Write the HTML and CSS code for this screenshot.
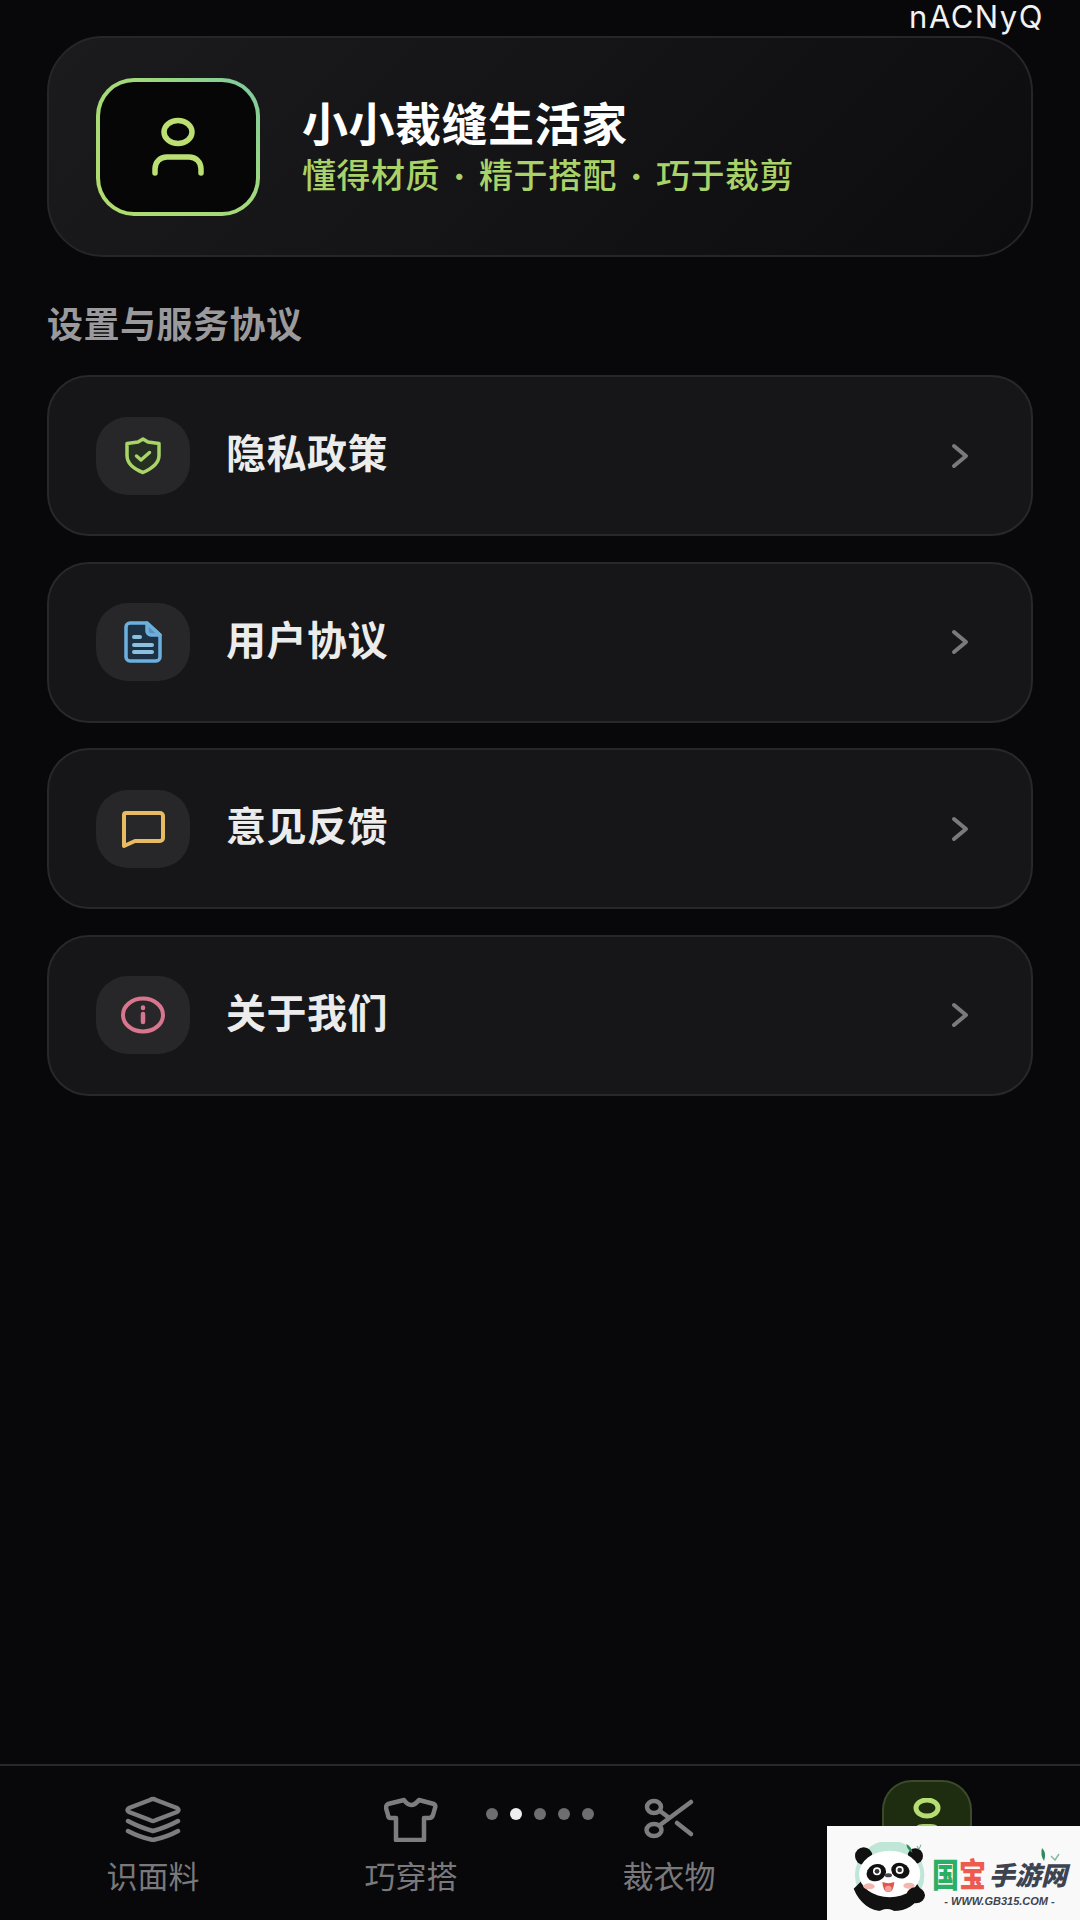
FILE: index.html
```html
<!DOCTYPE html>
<html lang="zh">
<head>
  <meta charset="UTF-8">
  <title>小小裁缝生活家</title>
  <link rel="stylesheet" href="styles.css">
</head>
<body>
  <div class="page">
    <div class="code-tag">nACNyQ</div>

    <!-- 头部卡片 -->
    <div class="profile">
      <div class="avatar">
        <svg width="60" height="60" viewBox="0 0 60 60" fill="none" stroke="#bcdf74" stroke-width="5.5" stroke-linecap="round">
          <ellipse cx="30" cy="15" rx="14" ry="11.5"/>
          <path d="M7 56v-4c0-7 5-12 12-12h22c7 0 12 5 12 12v4"/>
        </svg>
      </div>
      <div class="profile-text">
        <div class="profile-name">小小裁缝生活家</div>
        <div class="profile-sub">懂得材质<span class="sep">·</span>精于搭配<span class="sep">·</span>巧于裁剪</div>
      </div>
    </div>

    <div class="section-title">设置与服务协议</div>

    <div class="menu">
      <div class="menu-row">
        <div class="menu-icon">
          <svg width="40" height="40" viewBox="0 0 40 40" fill="#263022" stroke="#a8d468" stroke-width="3.5" stroke-linecap="round" stroke-linejoin="round">
            <path d="M20 3l5 3 11 1.5v12c0 8-7 13-16 17C11 33 4 28 4 19.500v-12L15 6z"/>
            <path d="M13.5 20l4.500 4 8.500-7.500" fill="none"/>
          </svg>
        </div>
        <div class="menu-label">隐私政策</div>
        <svg class="chevron" width="18" height="26" viewBox="0 0 18 26" fill="none" stroke="#7a7a7c" stroke-width="4" stroke-linecap="round" stroke-linejoin="round"><path d="M3 3l12 10-12 10"/></svg>
      </div>
      <div class="menu-row">
        <div class="menu-icon">
          <svg width="40" height="44" viewBox="0 0 40 44" fill="#1c3144" stroke="#6cb0e0" stroke-width="3.5" stroke-linecap="round" stroke-linejoin="round">
            <path d="M7 3h17l13 12v22a4 4 0 0 1-4 4H7a4 4 0 0 1-4-4V7a4 4 0 0 1 4-4z"/>
            <path d="M24 3v8a4 4 0 0 0 4 4h9z" fill="#5d90b4"/>
            <path d="M11 17h6M11 25h18M11 32h18" fill="none" stroke="#8cc0de" stroke-width="4"/>
          </svg>
        </div>
        <div class="menu-label">用户协议</div>
        <svg class="chevron" width="18" height="26" viewBox="0 0 18 26" fill="none" stroke="#7a7a7c" stroke-width="4" stroke-linecap="round" stroke-linejoin="round"><path d="M3 3l12 10-12 10"/></svg>
      </div>
      <div class="menu-row">
        <div class="menu-icon">
          <svg width="46" height="40" viewBox="0 0 46 40" fill="none" stroke="#e6bb62" stroke-width="4" stroke-linecap="round" stroke-linejoin="round">
            <path d="M6 4h34a3 3 0 0 1 3 3v22a3 3 0 0 1-3 3H15L4 37V6a2 2 0 0 1 2-2z"/>
          </svg>
        </div>
        <div class="menu-label">意见反馈</div>
        <svg class="chevron" width="18" height="26" viewBox="0 0 18 26" fill="none" stroke="#7a7a7c" stroke-width="4" stroke-linecap="round" stroke-linejoin="round"><path d="M3 3l12 10-12 10"/></svg>
      </div>
      <div class="menu-row">
        <div class="menu-icon">
          <svg width="46" height="40" viewBox="0 0 46 40" fill="none" stroke="#d9768f" stroke-width="4" stroke-linecap="round">
            <ellipse cx="23" cy="20" rx="20" ry="16.5"/>
            <path d="M23 19v8" stroke-width="4.5"/>
            <path d="M23 12.5v.5" stroke-width="4.5"/>
          </svg>
        </div>
        <div class="menu-label">关于我们</div>
        <svg class="chevron" width="18" height="26" viewBox="0 0 18 26" fill="none" stroke="#7a7a7c" stroke-width="4" stroke-linecap="round" stroke-linejoin="round"><path d="M3 3l12 10-12 10"/></svg>
      </div>
    </div>

    <div class="spacer"></div>

    <!-- 底部导航 -->
    <div class="tabbar">
      <div class="tab">
        <svg width="56" height="46" viewBox="0 0 56 46" fill="none" stroke="#7d7d7f" stroke-width="4.5" stroke-linecap="round" stroke-linejoin="round">
          <path d="M25 4Q28 2 31 4L52 12Q55 14 52 16L31 24Q28 26 25 24L4 16Q1 14 4 12z"/>
          <path d="M3 25Q14 31 28 35Q42 31 53 25"/>
          <path d="M3 35Q14 41 28 44Q42 41 53 35"/>
        </svg>
        <span>识面料</span>
      </div>
      <div class="tab">
        <svg width="54" height="46" viewBox="0 0 54 46" fill="none" stroke="#7d7d7f" stroke-width="4.5" stroke-linecap="round" stroke-linejoin="round">
          <path d="M20 4Q27 14 35 4L50 8Q52 9 51 12L49 19Q48 22 45 22H40V44H12V22H7Q4 22 4 19L2 12Q2 9 4 8z"/>
        </svg>
        <span>巧穿搭</span>
      </div>
      <div class="tab">
        <svg width="56" height="46" viewBox="0 0 56 46" fill="none" stroke="#7d7d7f" stroke-width="4.5" stroke-linecap="round">
          <ellipse cx="13" cy="11" rx="7" ry="6"/>
          <ellipse cx="13" cy="34" rx="7.5" ry="6"/>
          <path d="M19 29L50 6M19 15l8 6M36 27l14 11"/>
        </svg>
        <span>裁衣物</span>
      </div>
      <div class="tab tab-active">
        <div class="tab-pill">
          <svg width="36" height="46" viewBox="0 0 36 46" fill="none" stroke="#b6dd72" stroke-width="5">
            <ellipse cx="18" cy="10" rx="11" ry="8"/>
            <path d="M4 44v-9c0-6 5-9 10-9h8c5 0 10 3 10 9v9z" fill="#a6cc6e" stroke="none"/>
          </svg>
        </div>
      </div>
      <div class="dots">
        <i></i><i class="on"></i><i></i><i></i><i></i>
      </div>
    </div>

    <!-- 水印 -->
    <div class="watermark">
      <svg class="panda" width="80" height="72" viewBox="0 0 240 216">
        <circle cx="128" cy="100" r="104" fill="#bfe6d6"/>
        <path d="M20 140C40 190 80 212 120 206C170 212 205 195 226 150L200 110H50z" fill="#111"/>
        <path d="M86 216Q120 186 154 216z" fill="#f9f9f9"/>
        <circle cx="50" cy="42" r="26" fill="#111"/>
        <circle cx="205" cy="42" r="23" fill="#111"/>
        <ellipse cx="128" cy="96" rx="92" ry="70" fill="#fff"/>
        <ellipse cx="88" cy="92" rx="30" ry="25" transform="rotate(-25 88 92)" fill="#111"/>
        <ellipse cx="160" cy="86" rx="28" ry="23" transform="rotate(20 160 86)" fill="#111"/>
        <circle cx="90" cy="88" r="12" fill="#fff"/>
        <circle cx="158" cy="84" r="12" fill="#fff"/>
        <circle cx="90" cy="88" r="7" fill="#333"/>
        <circle cx="158" cy="84" r="7" fill="#333"/>
        <ellipse cx="124" cy="100" rx="11" ry="6" fill="#444"/>
        <path d="M106 120Q124 127 142 120Q140 150 124 150Q108 150 106 120z" fill="#e2574c"/>
        <ellipse cx="124" cy="140" rx="10" ry="9" fill="#f4a09a"/>
        <ellipse cx="66" cy="133" rx="17" ry="9" fill="#f3b7b0"/>
        <ellipse cx="186" cy="131" rx="17" ry="9" fill="#f3b7b0"/>
        <ellipse cx="206" cy="160" rx="28" ry="24" fill="#111"/>
        <path d="M178 6q16 8 18 26q-16-8-18-26z" fill="#2e8a5c"/>
        <path d="M210 12l6 10 6-14" fill="none" stroke="#6aa98a" stroke-width="3"/>
      </svg>
      <div class="wm-text">
        <div class="wm-name"><span class="wm-box">国</span><span class="wm-red">宝</span><span class="wm-dark">手游网</span></div>
        <div class="wm-url">- WWW.GB315.COM -</div>
      </div>
      <svg class="wm-leaf" width="20" height="14" viewBox="0 0 20 14" fill="none">
        <path d="M2 0q5 5 2 13q-4-6-2-13z" fill="#2e8a5c"/>
        <path d="M11 8l4 4 4-6" stroke="#8ab8a2" stroke-width="1.5"/>
      </svg>
    </div>
  </div>
</body>
</html>
```

FILE: styles.css
```css
/* Reset */
* {
  box-sizing: border-box;
  margin: 0;
  padding: 0;
}

body {
  width: 1080px;
  height: 1920px;
  background: #08080b;
  font-family: "Noto Sans CJK SC", "Liberation Sans", sans-serif;
  overflow: hidden;
}

.page {
  position: relative;
  height: 1920px;
  padding: 36px 47px 0;
  display: flex;
  flex-direction: column;
}

.code-tag {
  position: absolute;
  top: 1px;
  right: 36px;
  font-family: Inter, sans-serif;
  font-size: 31px;
  letter-spacing: 1.5px;
  color: #f2f2f2;
  line-height: 32px;
}

/* 头部卡片 */
.profile {
  height: 221px;
  flex: none;
  display: flex;
  align-items: center;
  gap: 42px;
  padding-left: 47px;
  background: linear-gradient(135deg, #1b1b1d 0%, #141416 50%, #0c0c0e 100%);
  border: 2px solid #26262a;
  border-radius: 56px;
}

.avatar {
  width: 164px;
  height: 138px;
  flex: none;
  display: flex;
  align-items: center;
  justify-content: center;
  border: 4px solid transparent;
  border-radius: 38px;
  background: linear-gradient(#060606, #060606) padding-box,
    linear-gradient(45deg, #b4dc6c 0%, #a0d97c 60%, #7cc8a0 100%) border-box;
}

.profile-text {
  padding-top: 3px;
}

.profile-name {
  font-size: 46px;
  font-weight: 700;
  color: #fff;
  letter-spacing: 0.5px;
  line-height: 50px;
}

.profile-sub {
  font-size: 34px;
  font-weight: 500;
  color: #a9d268;
  letter-spacing: 0.5px;
  line-height: 50px;
  margin-top: 3px;
  white-space: nowrap;
}

.sep {
  display: inline-block;
  width: 39px;
  text-align: center;
  font-weight: 400;
  font-size: 30px;
}

.section-title {
  font-size: 36px;
  font-weight: 700;
  color: #9a9a9c;
  letter-spacing: 0.5px;
  line-height: 44px;
  margin-top: 43px;
}

/* 菜单 */
.menu {
  display: flex;
  flex-direction: column;
  gap: 25.6px;
  margin-top: 31px;
}

.menu-row {
  height: 161px;
  display: flex;
  align-items: center;
  padding-left: 47px;
  padding-right: 62px;
  background: #161618;
  border: 2px solid #28282b;
  border-radius: 42px;
}

.menu-icon {
  width: 94px;
  height: 78px;
  flex: none;
  display: flex;
  align-items: center;
  justify-content: center;
  background: #272729;
  border-radius: 32px;
}

.menu-label {
  flex: 1;
  margin-left: 36px;
  padding-bottom: 9px;
  font-size: 40px;
  font-weight: 700;
  letter-spacing: 0.5px;
  color: #ececec;
}

.spacer {
  flex: 1;
}

/* 底部导航 */
.tabbar {
  position: relative;
  height: 156px;
  flex: none;
  margin: 0 -47px;
  border-top: 2px solid #28282a;
  display: grid;
  grid-template-columns: repeat(4, 258px);
  padding-left: 24px;
}

.tab {
  display: flex;
  flex-direction: column;
  align-items: center;
  padding-top: 30px;
  gap: 13px;
}

.tab span {
  font-size: 31px;
  color: #79797b;
  line-height: 40px;
}

.tab-active {
  padding-top: 14px;
}

.tab-pill {
  width: 90px;
  height: 80px;
  display: flex;
  justify-content: center;
  padding-top: 16px;
  background: #1e2c0f;
  border: 2px solid #3b4a2a;
  border-radius: 30px;
}

.dots {
  position: absolute;
  top: 42px;
  left: 486px;
  display: flex;
  gap: 12px;
}

.dots i {
  width: 12px;
  height: 12px;
  border-radius: 50%;
  background: #6e6e70;
}

.dots i.on {
  background: #eeeeee;
}

/* 水印 */
.watermark {
  position: absolute;
  right: 0;
  bottom: 0;
  width: 253px;
  height: 94px;
  background: #f9f9f9;
  display: flex;
  align-items: flex-start;
  gap: 5px;
  padding-left: 20px;
}

.panda {
  flex: none;
  margin-top: 16px;
}

.wm-text {
  margin-top: 29px;
}

.wm-name {
  display: flex;
  align-items: center;
  font-size: 27px;
  font-weight: 900;
  line-height: 38px;
  white-space: nowrap;
}

.wm-box {
  color: #2bae66;
  transform: scaleY(1.2);
}

.wm-red {
  color: #ee5b4e;
  transform: scaleY(1.2);
}

.wm-dark {
  margin-left: 3px;
  font-size: 26px;
  color: #3e4350;
  font-style: italic;
}

.wm-url {
  font-family: "Liberation Sans", sans-serif;
  font-size: 11px;
  font-weight: 700;
  font-style: italic;
  color: #3e4350;
  text-align: center;
  line-height: 14px;
  margin-top: 1px;
  white-space: nowrap;
}

.wm-leaf {
  position: absolute;
  top: 22px;
  right: 20px;
}
```
